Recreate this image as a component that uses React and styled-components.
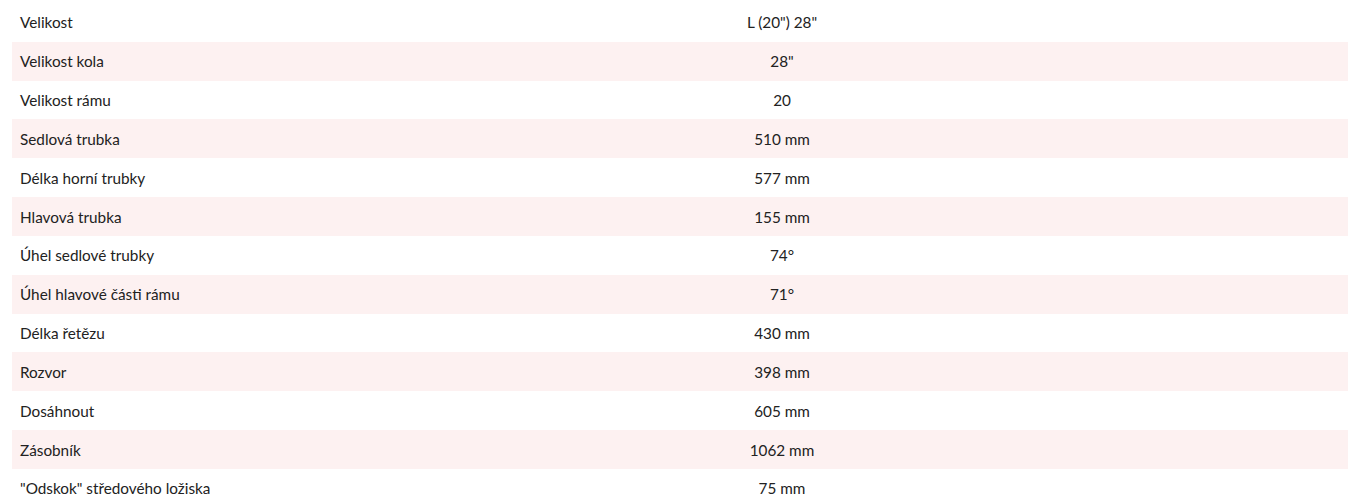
import React from 'react'
import styled, { createGlobalStyle } from 'styled-components'

const rows = [
  ['Velikost', 'L (20") 28"'],
  ['Velikost kola', '28"'],
  ['Velikost rámu', '20'],
  ['Sedlová trubka', '510 mm'],
  ['Délka horní trubky', '577 mm'],
  ['Hlavová trubka', '155 mm'],
  ['Úhel sedlové trubky', '74°'],
  ['Úhel hlavové části rámu', '71°'],
  ['Délka řetězu', '430 mm'],
  ['Rozvor', '398 mm'],
  ['Dosáhnout', '605 mm'],
  ['Zásobník', '1062 mm'],
  ['"Odskok" středového ložiska', '75 mm'],
]

const GlobalStyle = createGlobalStyle`
  body {
    margin: 0;
    background: #fff;
    font-family: Lato, "Open Sans", sans-serif;
    color: #222;
  }
`

const Wrap = styled.div`
  padding: 3px 13px 0 12px;
`

const Table = styled.table`
  width: 100%;
  border-collapse: collapse;
  font-size: 15.3px;
`

const Row = styled.tr`
  height: 38.83px;
  background: ${props => props.striped ? '#fdf1f1' : '#fff'};
`

const Label = styled.td`
  width: 196px;
  padding: 0 0 0 8px;
  text-align: left;
`

const Value = styled.td`
  padding: 0;
  text-align: center;
`

function App() {
  return (
    <Wrap>
      <GlobalStyle />
      <Table>
        <tbody>
          {rows.map(([label, value], i) =>
            <Row key={label} striped={i % 2 === 1}>
              <Label>{label}</Label>
              <Value>{value}</Value>
            </Row>
          )}
        </tbody>
      </Table>
    </Wrap>
  )
}

export default App
